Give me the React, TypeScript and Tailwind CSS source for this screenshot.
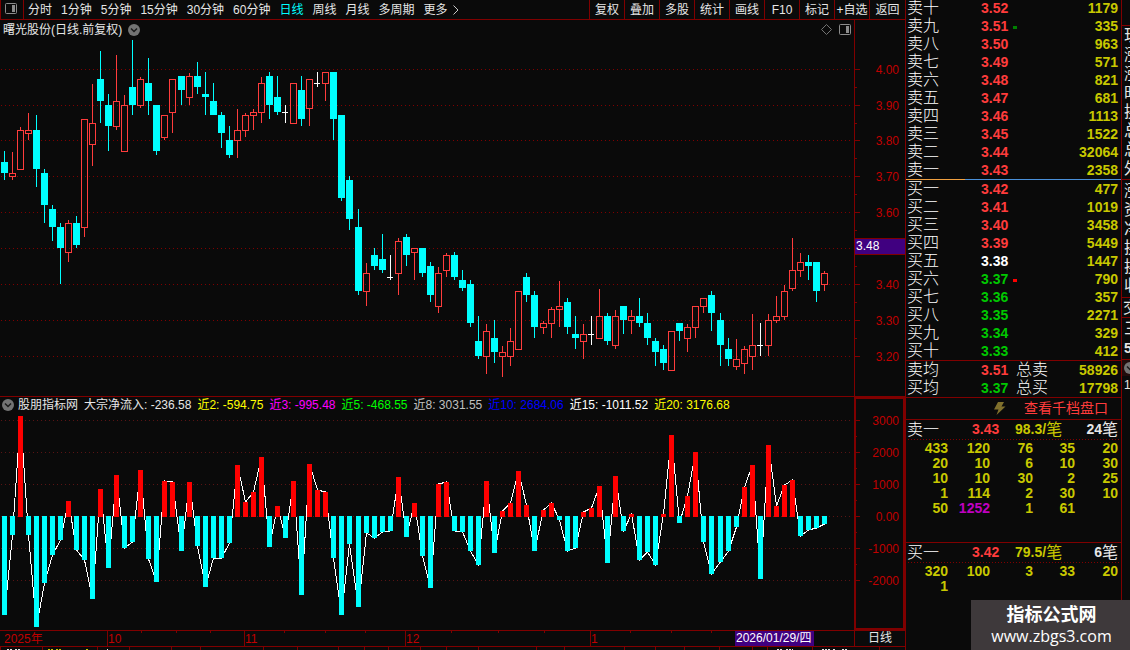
import { clsx } from "clsx";

// d = falling, u = rising, x = doji; then body top, body bottom, high, low
type Candle = ["d" | "u" | "x", number, number, number, number];

const candles: Candle[] = [
  ["d", 162, 173, 151, 180], ["u", 173, 177, 152, 180], ["u", 130, 170, 127, 170], ["u", 130, 134, 113, 140],
  ["d", 130, 169, 115, 187], ["d", 173, 205, 169, 223], ["d", 209, 227, 205, 241], ["d", 227, 248, 223, 284],
  ["u", 223, 253, 220, 262], ["d", 223, 245, 216, 248], ["u", 119, 228, 119, 237], ["u", 123, 145, 84, 166],
  ["d", 79, 101, 51, 123], ["d", 105, 126, 94, 151], ["u", 101, 127, 55, 130], ["u", 105, 152, 95, 152],
  ["d", 87, 105, 40, 115], ["u", 79, 106, 77, 108], ["d", 83, 101, 58, 115], ["d", 105, 151, 105, 155],
  ["u", 115, 138, 115, 140], ["u", 79, 113, 79, 133], ["d", 76, 90, 76, 105], ["u", 76, 98, 73, 105],
  ["d", 76, 87, 62, 94], ["d", 94, 97, 72, 115], ["d", 101, 115, 83, 115], ["d", 115, 133, 112, 148],
  ["d", 140, 155, 126, 158], ["u", 130, 141, 109, 158], ["u", 115, 131, 113, 137], ["u", 112, 116, 109, 130],
  ["u", 83, 113, 77, 123], ["d", 76, 105, 72, 119], ["d", 97, 112, 76, 115], ["x", 112, 113, 105, 123],
  ["u", 83, 124, 83, 124], ["d", 90, 119, 76, 126], ["u", 79, 109, 79, 126], ["x", 83, 84, 72, 87],
  ["u", 72, 84, 72, 101], ["d", 72, 119, 72, 140], ["d", 115, 198, 115, 201], ["d", 180, 219, 176, 230],
  ["d", 227, 291, 209, 295], ["u", 273, 292, 263, 306], ["d", 255, 266, 248, 270], ["d", 259, 270, 234, 273],
  ["x", 277, 278, 255, 280], ["u", 241, 274, 238, 295], ["d", 237, 255, 234, 266], ["u", 248, 253, 248, 280],
  ["d", 248, 273, 248, 277], ["d", 266, 295, 262, 302], ["u", 273, 307, 267, 313], ["u", 255, 271, 253, 277],
  ["d", 255, 277, 252, 280], ["d", 280, 288, 270, 291], ["d", 284, 323, 280, 327], ["d", 341, 356, 316, 359],
  ["u", 331, 357, 324, 374], ["d", 338, 352, 320, 363], ["u", 352, 357, 346, 377], ["u", 341, 357, 328, 366],
  ["u", 291, 350, 291, 350], ["d", 277, 295, 273, 302], ["d", 295, 327, 291, 338], ["u", 323, 328, 321, 334],
  ["u", 309, 324, 307, 338], ["u", 306, 310, 281, 327], ["d", 302, 327, 298, 334], ["d", 334, 338, 316, 349],
  ["u", 334, 342, 324, 359], ["x", 334, 335, 316, 345], ["u", 316, 339, 289, 339], ["d", 316, 341, 313, 345],
  ["u", 316, 346, 310, 349], ["d", 306, 320, 306, 334], ["u", 316, 321, 310, 334], ["d", 316, 323, 298, 327],
  ["d", 323, 338, 313, 345], ["d", 341, 352, 338, 366], ["d", 349, 363, 345, 370], ["u", 331, 371, 331, 371],
  ["d", 323, 331, 323, 341], ["u", 327, 339, 324, 352], ["u", 306, 328, 306, 338], ["u", 298, 307, 298, 313],
  ["d", 295, 313, 291, 331], ["d", 320, 345, 313, 366], ["d", 349, 359, 338, 366], ["u", 359, 367, 339, 370],
  ["u", 349, 364, 346, 374], ["u", 345, 357, 314, 370], ["x", 345, 346, 323, 356], ["u", 320, 346, 314, 356],
  ["u", 316, 321, 296, 323], ["u", 291, 317, 285, 320], ["u", 270, 289, 238, 291], ["u", 262, 271, 253, 277],
  ["d", 262, 266, 255, 280], ["d", 262, 291, 262, 302], ["u", 273, 285, 271, 291],
];

const ZERO = 516;

// end of every net-inflow bar, same vertical scale as the candles
const flows = [
  615, 535, 416, 535, 627, 583, 555, 540, 501, 550, 560, 599, 489, 568, 475, 548, 542, 470, 559, 582, 481, 482,
  551, 482, 546, 587, 558, 558, 543, 465, 502, 492, 457, 547, 506, 538, 481, 595, 464, 490, 492, 558, 615, 544,
  607, 533, 538, 532, 531, 477, 537, 503, 556, 588, 484, 482, 531, 532, 551, 565, 481, 553, 511, 503, 471, 505,
  551, 510, 503, 520, 551, 548, 512, 508, 486, 563, 476, 531, 514, 560, 552, 565, 514, 435, 523, 496, 452, 542,
  574, 562, 551, 527, 487, 465, 579, 445, 506, 485, 480, 536, 530, 528, 524,
];

// the 3.50 label gives way to the last-price tag
const priceTicks: [number, string][] = [
  [69, "4.00"], [105, "3.90"], [140, "3.80"], [176, "3.70"], [212, "3.60"],
  [248, ""], [284, "3.40"], [320, "3.30"], [356, "3.20"],
];
const flowTicks: [number, string][] = [
  [420, "3000"], [452, "2000"], [484, "1000"], [516, "0.00"], [548, "-1000"], [580, "-2000"],
];

const periods = ["分时", "1分钟", "5分钟", "15分钟", "30分钟", "60分钟", "日线", "周线", "月线", "多周期", "更多"];
const tools = ["复权", "叠加", "多股", "统计", "画线", "F10", "标记", "+自选", "返回"];

const indicators = [
  ["大宗净流入: -236.58", "text-[#e6e6e6]"],
  ["近2: -594.75", "text-[#ffff00]"],
  ["近3: -995.48", "text-[#ff00ff]"],
  ["近5: -468.55", "text-[#00ff00]"],
  ["近8: 3031.55", "text-[#c0c0c0]"],
  ["近10: 2684.06", "text-[#0000ff]"],
  ["近15: -1011.52", "text-white"],
  ["近20: 3176.68", "text-[#ffff00]"],
];

const asks = [
  ["卖十", "3.52", "1179"], ["卖九", "3.51", "335"], ["卖八", "3.50", "963"], ["卖七", "3.49", "571"],
  ["卖六", "3.48", "821"], ["卖五", "3.47", "681"], ["卖四", "3.46", "1113"], ["卖三", "3.45", "1522"],
  ["卖二", "3.44", "32064"], ["卖一", "3.43", "2358"],
];
const bids = [
  ["买一", "3.42", "477"], ["买二", "3.41", "1019"], ["买三", "3.40", "3458"], ["买四", "3.39", "5449"],
  ["买五", "3.38", "1447"], ["买六", "3.37", "790"], ["买七", "3.36", "357"], ["买八", "3.35", "2271"],
  ["买九", "3.34", "329"], ["买十", "3.33", "412"],
];
const averages = [
  ["卖均", "3.51", "58926", "总卖"],
  ["买均", "3.37", "17798", "总买"],
];
const askQueue = [
  ["433", "120", "76", "35", "20"], ["20", "10", "6", "10", "30"], ["10", "10", "30", "2", "25"],
  ["1", "114", "2", "30", "10"], ["50", "1252", "1", "61", ""],
];
const bidQueue = [["320", "100", "3", "33", "20"], ["1", "", "", "", ""]];

const CLOSE = 3.38;
const xOf = (i: number) => 4 + i * 8 + Math.floor((i + 1) / 22.5);

const priceColor = (p: string) =>
  Number(p) > CLOSE ? "text-[#ff3c3c]" : Number(p) < CLOSE ? "text-[#00c800]" : "text-white";

function Grid({ rows, color }: { rows: number[]; color: string }) {
  return (
    <>
      {rows.map((y) => (
        <line key={y} x1="1" x2="851" y1={y + 0.5} y2={y + 0.5} stroke={color} strokeDasharray="1 3" />
      ))}
    </>
  );
}

function CandleChart() {
  return (
    <svg className="block h-[356px] w-full" shapeRendering="crispEdges">
      <g transform="translate(0 -40)">
        <Grid rows={priceTicks.map(([y]) => y)} color="#800000" />
        {candles.map(([kind, top, bottom, high, low], i) => {
          const x = xOf(i);
          if (kind === "x") {
            return (
              <g key={i} fill="#ffffff">
                <rect x={x} y={high} width="1" height={low - high} />
                <rect x={x - 3} y={top} width="6" height="1" />
              </g>
            );
          }
          if (kind === "d") {
            return (
              <g key={i} fill="#00ffff">
                <rect x={x} y={high} width="1" height={low - high} />
                <rect x={x - 3} y={top} width="7" height={bottom - top} />
              </g>
            );
          }
          return (
            <g key={i} fill="#ff3c3c">
              <rect x={x} y={high} width="1" height={top - high} />
              <rect x={x} y={bottom} width="1" height={low - bottom} />
              <rect x={x - 2.5} y={top + 0.5} width="6" height={bottom - top - 1} fill="none" stroke="#ff3c3c" />
            </g>
          );
        })}
      </g>
    </svg>
  );
}

function FlowChart() {
  return (
    <svg className="block h-[217px] w-full" shapeRendering="crispEdges">
      <g transform="translate(0 -413)">
        <Grid rows={flowTicks.map(([y]) => y)} color="#5a1414" />
        <polyline
          points={flows.map((y, i) => `${xOf(i) + 0.5},${y}`).join(" ")}
          fill="none"
          stroke="#ffffff"
        />
        {flows.map((y, i) => (
          <rect
            key={i}
            x={xOf(i) - 2}
            y={Math.min(y, ZERO)}
            width="5"
            height={y < ZERO ? ZERO + 1 - y : y - ZERO}
            fill={y < ZERO ? "#ff0000" : "#00ffff"}
          />
        ))}
      </g>
    </svg>
  );
}

function AxisTicks({ ticks, minor }: { ticks: [number, string][]; minor: number[] }) {
  return (
    <>
      {ticks.map(([y, label]) => (
        <g key={y}>
          <rect x="1" y={y} width="5" height="1" fill="#800000" />
          {label && (
            <text x="45" y={y + 5} textAnchor="end" fontSize="12" fill="#c00000">
              {label}
            </text>
          )}
        </g>
      ))}
      {minor.map((y) => (
        <rect key={y} x="1" y={y} width="2" height="1" fill="#800000" />
      ))}
    </>
  );
}

function PriceAxis() {
  return (
    <svg className="block h-[376px] w-[51px] shrink-0" shapeRendering="crispEdges">
      <g transform="translate(0 -20)">
        <rect x="0" y="20" width="1" height="376" fill="#800000" />
        <AxisTicks ticks={priceTicks} minor={[87, 123, 158, 194, 230, 266, 302, 338]} />
        <rect x="1" y="238" width="50" height="17" fill="#800000" />
        <rect x="1" y="239" width="50" height="15" fill="#400080" />
        <text x="2" y="250" fontSize="12" fill="#ffffff">
          3.48
        </text>
      </g>
    </svg>
  );
}

function FlowAxis() {
  return (
    <svg className="block h-[233px] w-[51px] shrink-0" shapeRendering="crispEdges">
      <g transform="translate(0 -397)">
        <path d="M51 398H1V629H51M50 397V630" fill="none" stroke="#800000" strokeWidth="2" />
        <AxisTicks ticks={flowTicks} minor={[436, 468, 500, 532, 564]} />
      </g>
    </svg>
  );
}

function DateAxis() {
  const months: [number, string][] = [[107, "10"], [244, "11"], [405, "12"], [590, "1"]];
  return (
    <svg className="block h-[15px] min-w-0 flex-1" shapeRendering="crispEdges" fontSize="12">
      <text x="4" y="12" fill="#c00000">
        2025年
      </text>
      {months.map(([x, label]) => (
        <g key={x}>
          <rect x={x} y="0" width="1" height="15" fill="#800000" />
          <text x={x + 1} y="12" fill="#c00000">
            {label}
          </text>
        </g>
      ))}
      {[141, 176, 210, 284, 325, 365, 451, 498, 544, 630, 671, 711].map((x) => (
        <rect key={x} x={x} y="0" width="1" height="2" fill="#800000" />
      ))}
      <rect x="735" y="0" width="79" height="15" fill="#400080" />
      <text x="736" y="11" fill="#ffffff">
        2026/01/29/四
      </text>
    </svg>
  );
}

// top edge of the next pane, cut by the window
function NextPane() {
  return (
    <svg className="block h-[3px] w-full" shapeRendering="crispEdges">
      {[0, 42, 97, 129, 171, 200, 263, 297, 338, 364, 388, 420, 446, 478, 536, 564, 624, 655, 684, 719, 752, 767, 812, 879].map((x) => (
        <rect key={x} x={x} y="0" width="1" height="3" fill="#800000" />
      ))}
      <path d="M7 2.5h6M15 2.5h6M107 2.5h1M777 2.5h6M786 2.5h7M822 2.5h9M833 2.5h3M842 2.5h5" stroke="#e6e6e6" strokeDasharray="2 1" />
      <path d="M48 2.5h6M56 2.5h6M86 2.5h2" stroke="#c8c800" strokeDasharray="2 1" />
    </svg>
  );
}

function PaneIcon() {
  return (
    <svg width="12" height="11" viewBox="0 0 12 11" className="block">
      <rect x="0.5" y="0.5" width="11" height="10" rx="1" fill="none" stroke="#8c8c8c" />
      <rect x="7" y="2" width="3" height="7" fill="#8c8c8c" />
    </svg>
  );
}

function RoundChevron() {
  return (
    <svg width="12" height="12" viewBox="0 0 12 12" className="block shrink-0">
      <circle cx="6" cy="6" r="6" fill="#737373" />
      <path d="M3 4.5L6 7.5L9 4.5" fill="none" stroke="#1a1a1a" strokeWidth="1.5" />
    </svg>
  );
}

function Toolbar() {
  return (
    <header className="flex h-5 border-b border-[#800000] leading-[18px]">
      <button aria-label="侧栏" className="flex w-6 items-center border-x border-[#800000] pb-[2px] pl-1">
        <PaneIcon />
      </button>
      <nav className="flex min-w-0 flex-1 items-center gap-[9px] overflow-hidden pl-1 whitespace-nowrap">
        {periods.map((p) => (
          <button key={p} className={p === "日线" ? "text-[#00ffff]" : "text-[#e6e6e6]"}>
            {p}
          </button>
        ))}
        <svg width="6" height="10" viewBox="0 0 6 10" className="-ml-1">
          <path d="M0.5 0.5L5 5L0.5 9.5" fill="none" stroke="#c8c8c8" />
        </svg>
      </nav>
      <div className="flex shrink-0">
        {tools.map((t) => (
          <button
            key={t}
            className="w-[35px] border-l border-[#800000] text-center whitespace-nowrap text-[#e6e6e6] last:w-9"
          >
            {t}
          </button>
        ))}
      </div>
    </header>
  );
}

function BookTable({ rows, className }: { rows: string[][]; className?: string }) {
  return (
    <table className={clsx("w-full table-fixed border-collapse", className)}>
      <colgroup>
        <col className="w-[75px]" />
        <col className="w-[35px]" />
        <col className="w-10" />
        <col />
      </colgroup>
      <tbody>
        {rows.map(([label, price, volume, total]) => (
          <tr key={label} className="h-[18px] whitespace-nowrap">
            <td className="p-0 pl-px text-base leading-[18px] font-light text-white">{label}</td>
            <td className={clsx("p-0 text-sm leading-4 font-bold", priceColor(price))}>
              {price}
              {label === "卖九" && <span className="ml-[5px] inline-block h-[3px] w-1 bg-[#008000] align-middle" />}
              {label === "买六" && <span className="ml-[5px] inline-block h-[3px] w-1 bg-[#ff0000] align-middle" />}
            </td>
            <td className="p-0 text-base leading-[18px] font-light text-white">{total}</td>
            <td className="p-0 pr-[3px] text-right text-sm leading-4 font-bold text-[#c8c800]">{volume}</td>
          </tr>
        ))}
      </tbody>
    </table>
  );
}

type QueueProps = { label: string; price: string; average: string; count: string; rows: string[][] };

function Queue({ label, price, average, count, rows }: QueueProps) {
  return (
    <>
      <div className="flex h-[19px] items-center pl-px text-base leading-[17px] text-[#e6e6e6]">
        <span className="w-[65px] font-light text-white">{label}</span>
        <b className="w-[43px] text-sm leading-[17px] text-[#ff3c3c]">{price}</b>
        <span className="flex flex-1 items-center text-[#c8c800]">
          <b className="text-sm leading-[17px]">{average}/</b>笔
        </span>
        <span className="flex items-center pr-[3px]">
          <b className="text-sm leading-[17px]">{count}</b>笔
        </span>
      </div>
      <svg className="block h-px w-full" shapeRendering="crispEdges">
        <line x1="2" x2="213" y1="0.5" y2="0.5" stroke="#800000" strokeDasharray="1 2" />
      </svg>
      <table className="mt-px w-full table-fixed border-collapse text-right text-sm font-bold text-[#c8c800]">
        <colgroup>
          <col className="w-[42px]" />
          <col className="w-[42px]" />
          <col className="w-[43px]" />
          <col className="w-[42px]" />
          <col />
        </colgroup>
        <tbody>
          {rows.map((row, r) => (
            <tr key={r} className="h-[15px]">
              {row.map((v, c) => (
                <td key={c} className={clsx("p-0 leading-[15px] last:pr-[3px]", v === "1252" && "text-[#c000c0]")}>
                  {v}
                </td>
              ))}
            </tr>
          ))}
        </tbody>
      </table>
    </>
  );
}

function OrderBook() {
  return (
    <aside className="flex w-[217px] shrink-0 flex-col border-x border-[#800000]">
      <BookTable rows={asks} className="-mt-px" />
      <div className="flex h-px">
        <div className="w-[59px] bg-[#f0a040]" />
        <div className="flex-1 bg-[#4a90d9]" />
      </div>
      <BookTable rows={bids} />
      <div className="border-y border-[#800000]">
        <BookTable rows={averages} />
      </div>
      <div className="flex h-[21px] items-center justify-end gap-[18px] pr-[13px] pb-px">
        <svg width="13" height="13" viewBox="0 0 13 13">
          <path d="M5 0H11L8.5 4.5H12.5L3.5 13L5.5 7.5H1Z" fill="#80702c" />
        </svg>
        <button className="text-sm leading-5 text-[#ff3c3c]">查看千档盘口</button>
      </div>
      <section className="h-[123px] border-t border-[#800000]">
        <Queue label="卖一" price="3.43" average="98.3" count="24" rows={askQueue} />
      </section>
      <section className="border-t border-[#800000]">
        <Queue label="买一" price="3.42" average="79.5" count="6" rows={bidQueue} />
      </section>
    </aside>
  );
}

// quote panel, mostly outside the window
function QuoteStrip() {
  return (
    <div className="w-2 shrink-0 overflow-hidden pt-[25px] text-base text-[#e6e6e6]">
      <div className="h-[154px] border-t border-[#800000] pl-[2px]">
        {["现", "涨", "涨", "时", "换", "总", "总", "外"].map((c, i) => (
          <div key={i} className="h-[19px] w-4 leading-[19px]">{c}</div>
        ))}
      </div>
      <div className="h-[118px] border-t border-[#800000] pt-px pl-[2px]">
        {["涨", "资", "净", "换", "换", "收"].map((c, i) => (
          <div key={i} className="h-[19px] w-4 leading-[19px]">{c}</div>
        ))}
      </div>
      <div className="h-5 w-5 border-t border-[#800000] pl-px leading-[19px]">交</div>
      <div className="h-[42px] w-5 border-t border-[#800000] pl-[2px] leading-[21px]">
        <div>三</div>
        <b className="block text-sm leading-[19px]">5</b>
      </div>
      <div className="h-[17px] w-5 border-t border-[#800000] bg-[#200c0c] pt-[2px] pl-[2px]">
        <RoundChevron />
      </div>
      <div className="pl-[2px] text-xs leading-[18px]">1</div>
    </div>
  );
}

export default function App() {
  return (
    <div className="relative flex h-screen w-full overflow-hidden bg-[#0a0a0a] font-['Liberation_Sans','Noto_Sans_CJK_SC',sans-serif] text-xs">
      <main className="flex min-w-0 flex-1 flex-col">
        <Toolbar />

        <section className="flex">
          <div className="min-w-0 flex-1">
            <div className="flex h-5 items-center pr-[3px] pb-px pl-[3px] text-[#e6e6e6]">
              <h1 className="mr-[6px]">曙光股份(日线.前复权)</h1>
              <RoundChevron />
              <svg width="11" height="11" viewBox="0 0 11 11" className="mr-[7px] ml-auto">
                <path d="M5.5 0.5L10.5 5.5L5.5 10.5L0.5 5.5Z" fill="none" stroke="#737373" />
              </svg>
              <PaneIcon />
            </div>
            <CandleChart />
          </div>
          <PriceAxis />
        </section>

        <section className="flex border-t border-[#800000]">
          <div className="min-w-0 flex-1">
            <div className="flex h-4 items-center gap-[6px] pl-[2px] leading-4 whitespace-nowrap">
              <RoundChevron />
              <h2 className="-ml-[2px] text-[#e6e6e6]">股朋指标网</h2>
              {indicators.map(([text, color]) => (
                <span key={text} className={color}>
                  {text}
                </span>
              ))}
            </div>
            <FlowChart />
          </div>
          <FlowAxis />
        </section>

        <footer>
          <div className="flex border-y border-[#800000]">
            <DateAxis />
            <div className="h-[15px] w-[51px] border-l border-[#800000] text-center leading-[15px] text-[#e6e6e6]">日线</div>
          </div>
          <NextPane />
        </footer>
      </main>

      <OrderBook />
      <QuoteStrip />

      <div className="absolute right-0 bottom-0 flex h-[50px] w-[159px] flex-col items-center bg-[#3e393b] pt-1 pl-[2px] text-white">
        <p className="text-lg leading-[22px] font-bold">指标公式网</p>
        <p className="font-['Open_Sans',sans-serif] text-base leading-[20px]">www.zbgs3.com</p>
      </div>
    </div>
  );
}
